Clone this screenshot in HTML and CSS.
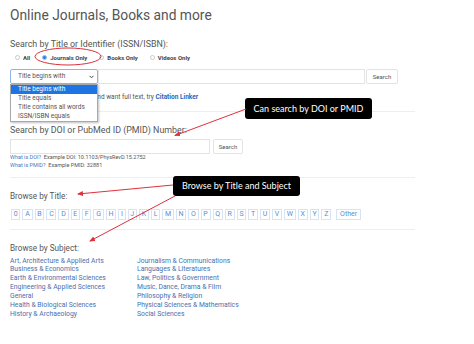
FILE: index.html
```html
<!DOCTYPE html>
<html lang="en">
<head>
<meta charset="utf-8">
<title>Online Journals, Books and more</title>
<link rel="stylesheet" href="styles.css">
</head>
<body>
<div class="page">
  <h1 class="title">Online Journals, Books and more</h1>

  <h2 class="label wide-label first">Search by Title or Identifier (ISSN/ISBN):</h2>
  <div class="radios">
    <span class="radio"><i class="dot"></i>All</span>
    <span class="radio"><i class="dot on"></i>Journals Only</span>
    <span class="radio"><i class="dot"></i>Books Only</span>
    <span class="radio"><i class="dot"></i>Videos Only</span>
  </div>
  <div class="searchrow">
    <div class="select">Title begins with
      <svg class="chev" width="5" height="4" viewBox="0 0 5 4"><path d="M0.5 0.8 L2.5 2.8 L4.5 0.8" fill="none" stroke="#444" stroke-width="1"/></svg>
    </div>
    <div class="input wide"></div>
    <div class="btn">Search</div>
    <ul class="menu">
      <li class="sel">Title begins with</li>
      <li>Title equals</li>
      <li>Title contains all words</li>
      <li>ISSN/ISBN equals</li>
    </ul>
  </div>
  <p class="note">If you already have a citation and want full text, try <a class="strong">Citation Linker</a></p>

  <hr class="rule r1">

  <h2 class="label wide-label">Search by DOI or PubMed ID (PMID) Number:</h2>
  <div class="doirow">
    <div class="input doi"></div>
    <div class="btn small">Search</div>
  </div>
  <p class="help"><a>What is DOI?</a>&nbsp; Example DOI: 10.1103/PhysRevD.15.2752</p>
  <p class="help"><a>What is PMID?</a>&nbsp; Example PMID: 32881</p>

  <hr class="rule r2">

  <h2 class="label">Browse by Title:</h2>
  <div class="letters">
    <a>0</a><a>A</a><a>B</a><a>C</a><a>D</a><a>E</a><a>F</a><a>G</a><a>H</a><a>I</a><a>J</a><a>K</a><a>L</a><a>M</a><a>N</a><a>O</a><a>P</a><a>Q</a><a>R</a><a>S</a><a>T</a><a>U</a><a>V</a><a>W</a><a>X</a><a>Y</a><a>Z</a><a class="other">Other</a>
  </div>

  <hr class="rule r3">

  <h2 class="label">Browse by Subject:</h2>
  <div class="subjects">
    <ul>
      <li>Art, Architecture &amp; Applied Arts</li>
      <li>Business &amp; Economics</li>
      <li>Earth &amp; Environmental Sciences</li>
      <li>Engineering &amp; Applied Sciences</li>
      <li>General</li>
      <li>Health &amp; Biological Sciences</li>
      <li>History &amp; Archaeology</li>
    </ul>
    <ul>
      <li>Journalism &amp; Communications</li>
      <li>Languages &amp; Literatures</li>
      <li>Law, Politics &amp; Government</li>
      <li>Music, Dance, Drama &amp; Film</li>
      <li>Philosophy &amp; Religion</li>
      <li>Physical Sciences &amp; Mathematics</li>
      <li>Social Sciences</li>
    </ul>
  </div>

  <div class="tip tip1">Can search by DOI or PMID</div>
  <div class="tip tip2">Browse by Title and Subject</div>

  <svg class="ann" width="474" height="344" viewBox="0 0 474 344">
    <defs>
      <marker id="ah" markerWidth="6" markerHeight="6" refX="5" refY="3" orient="auto" markerUnits="userSpaceOnUse">
        <path d="M0,0.5 L6,3 L0,5.5 z" fill="#e0313c"/>
      </marker>
    </defs>
    <ellipse cx="68" cy="56.5" rx="33" ry="8.5" fill="none" stroke="#d8303a" stroke-width="1"/>
    <line x1="246" y1="109" x2="175" y2="135.5" stroke="#e0313c" stroke-width="1" marker-end="url(#ah)"/>
    <line x1="173" y1="185" x2="78" y2="194" stroke="#e0313c" stroke-width="1" marker-end="url(#ah)"/>
    <line x1="175" y1="196" x2="90" y2="241" stroke="#e0313c" stroke-width="1" marker-end="url(#ah)"/>
  </svg>
</div>
</body>
</html>
```

FILE: styles.css
```css
html, body {
  margin: 0;
  background: #fff;
}
body {
  font-family: Roboto, "Liberation Sans", sans-serif;
  color: #555;
}
.page {
  position: relative;
  width: 474px;
  height: 344px;
  padding-left: 10px;
  box-sizing: border-box;
  overflow: hidden;
}
.title {
  margin: 0;
  padding-top: 7px;
  font-size: 13.8px;
  line-height: 16px;
  font-weight: 400;
  color: #555;
}
.label {
  margin: 13px 0 0;
  font-size: 8.2px;
  line-height: 10px;
  font-weight: 400;
  color: #555;
}
.label.wide-label {
  font-size: 8.9px;
}
.label.first {
  margin-top: 16px;
}
.radios {
  margin-top: 3px;
  height: 11px;
  display: flex;
  align-items: center;
  padding-left: 5px;
}
.radio {
  display: flex;
  align-items: center;
  font-size: 6px;
  font-weight: 700;
  color: #444;
  margin-right: 12px;
}
.dot {
  width: 3px;
  height: 3px;
  border: 1px solid #c8c8c8;
  border-radius: 50%;
  margin-right: 3px;
  background: #fff;
}
.dot.on {
  border-color: #9cc0ea;
  background: #2f7fe6;
}
.searchrow {
  position: relative;
  margin-top: 6px;
  height: 15px;
  display: flex;
  width: 388px;
}
.select {
  position: relative;
  width: 88px;
  height: 15px;
  box-sizing: border-box;
  border: 1px solid #8db6e4;
  border-radius: 2px;
  padding-left: 7px;
  font-size: 6.5px;
  line-height: 13px;
  color: #555;
  background: #fff;
}
.chev {
  position: absolute;
  right: 3px;
  top: 5px;
}
.input {
  height: 15px;
  box-sizing: border-box;
  border: 1px solid #e3e3e3;
  background: #fff;
}
.input.wide {
  flex: 1;
  margin-right: 1px;
}
.btn {
  width: 32px;
  height: 15px;
  box-sizing: border-box;
  border: 1px solid #e3e3e3;
  border-radius: 2px;
  font-size: 6px;
  line-height: 13px;
  text-align: center;
  color: #555;
}
.btn.small {
  width: 30px;
}
.menu {
  position: absolute;
  left: 0;
  top: 15px;
  width: 88px;
  margin: 0;
  padding: 0;
  list-style: none;
  box-sizing: border-box;
  border: 1px solid #a9a9a9;
  background: #fff;
  box-shadow: 1px 1px 2px rgba(0,0,0,.25);
  z-index: 2;
}
.menu li {
  height: 9px;
  line-height: 9px;
  font-size: 6.5px;
  padding-left: 7px;
  color: #555;
}
.menu li.sel {
  background: #1e74e3;
  color: #fff;
}
.note {
  margin: 9px 0 0;
  font-size: 6.5px;
  line-height: 9px;
  color: #555;
}
a {
  color: #3b6fb8;
  text-decoration: none;
}
.strong {
  font-weight: 700;
  color: #2a66b8;
}
.rule {
  margin: 9px 0 0;
  width: 405px;
  border: 0;
  border-top: 1px solid #eeeeee;
  height: 0;
}
.r2 {
  margin-top: 8px;
}
.doirow {
  margin-top: 4px;
  display: flex;
  gap: 3px;
}
.input.doi {
  width: 200px;
}
.help {
  margin: 0;
  font-size: 5.5px;
  line-height: 7.5px;
  color: #555;
}
.help a {
  color: #4a78bd;
}
.letters {
  margin: 8px 0 0 1px;
  display: flex;
  gap: 2px;
}
.letters a {
  height: 11px;
  box-sizing: border-box;
  border: 1px solid #d6e4f3;
  padding: 0 1.75px;
  font-size: 7px;
  line-height: 9px;
  color: #5a8dd4;
}
.letters a.other {
  padding: 0 3px;
  margin-left: 3px;
}
.subjects {
  margin-top: 3.5px;
  display: grid;
  grid-template-columns: 127px 1fr;
}
.subjects ul {
  margin: 0;
  padding: 0;
  list-style: none;
}
.subjects li {
  font-size: 6.8px;
  line-height: 8.9px;
  color: #4a6fae;
}
.tip {
  position: absolute;
  background: #000;
  color: #fff;
  border-radius: 3px;
  font-family: Lato, "Open Sans", sans-serif;
  font-size: 9px;
  text-align: center;
  width: 127px;
}
.tip1 {
  left: 245px;
  top: 98px;
  height: 21px;
  line-height: 21px;
}
.tip2 {
  left: 173px;
  top: 176px;
  height: 20px;
  line-height: 20px;
}
.ann {
  position: absolute;
  left: 0;
  top: 0;
  pointer-events: none;
}
```
